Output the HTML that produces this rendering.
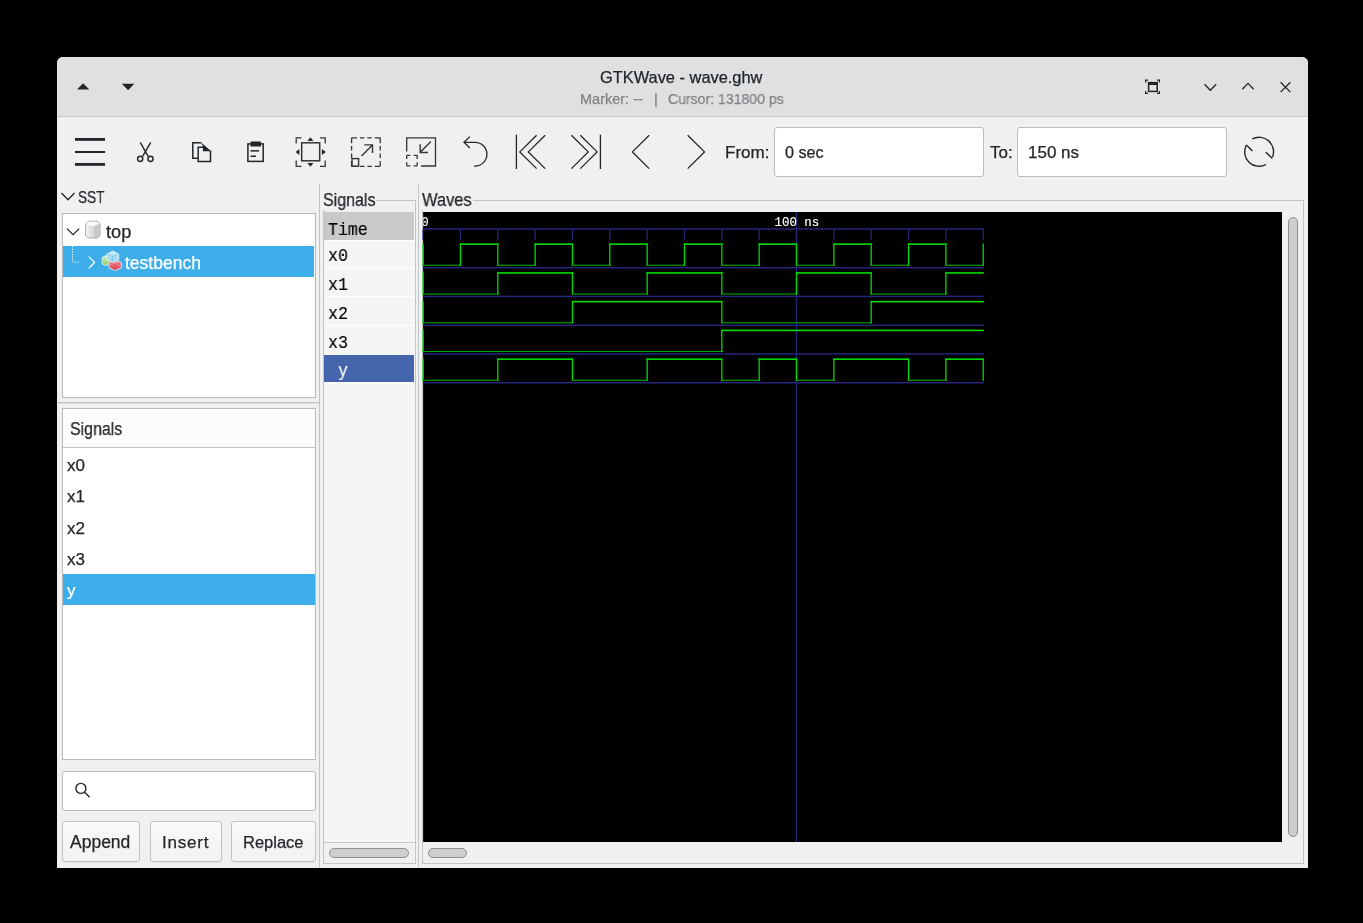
<!DOCTYPE html>
<html><head><meta charset="utf-8">
<style>
*{box-sizing:border-box;margin:0;padding:0}
html,body{width:1363px;height:923px;background:#000;overflow:hidden;font-family:"Liberation Sans",sans-serif;color:#232629}
.a{position:absolute}
.t{position:absolute;white-space:nowrap;line-height:1;will-change:transform;-webkit-text-stroke:0.25px currentColor}
.m{font-family:"Liberation Mono",monospace;-webkit-text-stroke:0.15px currentColor}
.box{position:absolute;background:#fff;border:1px solid #b9babb}
.btn{position:absolute;border:1px solid #c1c2c3;border-radius:3px;background:linear-gradient(#f9f9fa,#f1f2f3);box-shadow:0 1px 0 rgba(0,0,0,0.06)}
.sl{position:absolute;background:#cdcecf;border:1px solid #8e9091;border-radius:6px}
</style></head><body>
<!-- window -->
<div class="a" style="left:57px;top:57px;width:1251px;height:811px;background:#eff0f1;border-radius:6px 6px 0 0;overflow:hidden;">
  <div class="a" style="left:0;top:0;width:1251px;height:60px;background:#dee0e2;border-bottom:1px solid #c5c7c9"></div>
</div>
<!-- title text -->
<div class="t" style="left:600px;top:69px;font-size:16.4px">GTKWave - wave.ghw</div>
<div class="t" style="left:580px;top:92px;font-size:14.5px;color:#808284">Marker: --</div>
<div class="t" style="left:654px;top:92px;font-size:14.5px;color:#808284">|</div>
<div class="t" style="left:668px;top:92px;font-size:14.5px;color:#808284;transform-origin:left;transform:scaleX(0.97)">Cursor: 131800 ps</div>

<!-- toolbar text -->
<div class="t" style="left:725px;top:144px;font-size:17px">From:</div>
<div class="box" style="left:774px;top:127px;width:210px;height:50px;border-radius:3px;border-color:#bcbdbe"></div>
<div class="t" style="left:785px;top:144px;font-size:16.2px">0 sec</div>
<div class="t" style="left:990px;top:144px;font-size:17px">To:</div>
<div class="box" style="left:1017px;top:127px;width:210px;height:50px;border-radius:3px;border-color:#bcbdbe"></div>
<div class="t" style="left:1028px;top:144px;font-size:17px">150 ns</div>

<!-- left pane -->
<div class="t" style="left:78px;top:189px;font-size:17px;transform-origin:left;transform:scaleX(0.8)">SST</div>
<div class="box" style="left:62px;top:213px;width:254px;height:185px"></div>
<div class="a" style="left:63px;top:246px;width:251px;height:31px;background:#3daee9"></div>
<div class="t" style="left:106px;top:223.7px;font-size:17.5px;transform-origin:left;transform:scaleX(1.04)">top</div>
<div class="t" style="left:125px;top:254.5px;font-size:17.5px;color:#fff">testbench</div>
<div class="a" style="left:58px;top:402px;width:261px;height:1px;background:#c2c3c4"></div>
<div class="a" style="left:58px;top:403px;width:261px;height:1px;background:#dcdddf"></div>

<div class="box" style="left:62px;top:408px;width:254px;height:352px"></div>
<div class="a" style="left:63px;top:409px;width:252px;height:39px;background:#fcfcfc;border-bottom:1px solid #c3c4c5"></div>
<div class="t" style="left:70.3px;top:419.5px;font-size:18.1px;transform-origin:left;transform:scaleX(0.88)">Signals</div>
<div class="t" style="left:67px;top:457px;font-size:17px">x0</div>
<div class="t" style="left:67px;top:488px;font-size:17px">x1</div>
<div class="t" style="left:67px;top:520px;font-size:17px">x2</div>
<div class="t" style="left:67px;top:551px;font-size:17px">x3</div>
<div class="a" style="left:63px;top:574px;width:252px;height:31px;background:#3daee9"></div>
<div class="t" style="left:67px;top:581.5px;font-size:17px;color:#fff">y</div>

<div class="box" style="left:62px;top:771px;width:254px;height:40px;border-radius:3px"></div>
<div class="btn" style="left:62px;top:821px;width:78px;height:41px"></div>
<div class="btn" style="left:150px;top:821px;width:72px;height:41px"></div>
<div class="btn" style="left:231px;top:821px;width:85px;height:41px"></div>
<div class="t" style="left:70px;top:834px;font-size:17.5px">Append</div>
<div class="t" style="left:162px;top:834px;font-size:17px;letter-spacing:0.8px">Insert</div>
<div class="t" style="left:243px;top:834px;font-size:16.5px">Replace</div>

<!-- separators -->
<div class="a" style="left:319px;top:184px;width:1px;height:684px;background:#c3c4c5"></div>
<div class="a" style="left:418px;top:184px;width:1px;height:684px;background:#c3c4c5"></div>

<!-- signals frame -->
<div class="a" style="left:323px;top:200px;width:93px;height:664px;border:1px solid #c3c4c5"></div>
<div class="a" style="left:322px;top:190px;width:54px;height:20px;background:#eff0f1"></div>
<div class="t" style="left:323px;top:191px;font-size:18.5px;transform-origin:left;transform:scaleX(0.865)">Signals</div>
<div class="a" style="left:324px;top:212px;width:91px;height:630px;background:#f5f5f5"></div>
<div class="a" style="left:324px;top:842px;width:91px;height:1px;background:#c8c9ca"></div>
<div class="a" style="left:324px;top:212px;width:90px;height:28px;background:#c9c9c9"></div>
<div class="a" style="left:324px;top:240px;width:90px;height:1px;background:#fff"></div>
<div class="a" style="left:324px;top:267px;width:90px;height:1px;background:#fff"></div>
<div class="a" style="left:324px;top:296px;width:90px;height:1px;background:#fff"></div>
<div class="a" style="left:324px;top:325px;width:90px;height:1px;background:#fff"></div>
<div class="a" style="left:324px;top:355px;width:90px;height:27px;background:#4464ac"></div>
<div class="a" style="left:324px;top:382px;width:90px;height:2px;background:#fafafa"></div>
<div class="t m" style="color:#000;left:327.6px;top:221.7px;font-size:18.6px;transform-origin:left;transform:scaleX(0.89)">Time</div>
<div class="t m" style="color:#000;left:327.6px;top:248.0px;font-size:18.6px;transform-origin:left;transform:scaleX(0.89)">x0</div>
<div class="t m" style="color:#000;left:327.6px;top:277.0px;font-size:18.6px;transform-origin:left;transform:scaleX(0.89)">x1</div>
<div class="t m" style="color:#000;left:327.6px;top:306.0px;font-size:18.6px;transform-origin:left;transform:scaleX(0.89)">x2</div>
<div class="t m" style="color:#000;left:327.6px;top:335.0px;font-size:18.6px;transform-origin:left;transform:scaleX(0.89)">x3</div>
<div class="t m" style="left:337.6px;top:363px;font-size:18.6px;color:#fff;transform-origin:left;transform:scaleX(0.89)">y</div>
<div class="sl" style="left:329px;top:848px;width:80px;height:10px"></div>

<!-- waves frame -->
<div class="a" style="left:422px;top:200px;width:882px;height:664px;border:1px solid #c3c4c5"></div>
<div class="a" style="left:421px;top:190px;width:52px;height:20px;background:#eff0f1"></div>
<div class="t" style="left:422px;top:191.5px;font-size:17.9px;transform-origin:left;transform:scaleX(0.92)">Waves</div>
<div class="sl" style="left:1288px;top:217px;width:10px;height:620px"></div>
<div class="sl" style="left:428px;top:848px;width:39px;height:10px"></div>

<svg class="a" style="left:0;top:0;will-change:transform" width="1363" height="923" viewBox="0 0 1363 923">
  <g fill="#232629">
  <!-- title bar left arrows -->
  <path d="M77 89.6 L83.1 83.2 L89.3 89.6 Z"/>
  <path d="M121.8 83.8 L134.4 83.8 L128.1 90.3 Z"/>
  <!-- hamburger -->
  <rect x="75" y="138" width="30" height="2.8"/>
  <rect x="75" y="151" width="30" height="2"/>
  <rect x="75" y="163" width="30" height="2.8"/>
  </g>
  <g fill="none" stroke="#232629" stroke-width="1.4">
  <!-- scissors -->
  <path d="M140.3 142.4 L145.4 151.6 L148.3 156.4 M150.7 142.4 L145.4 151.6 L142.6 156.4"/>
  <circle cx="140.2" cy="158.8" r="2.6" stroke-width="1.5"/>
  <circle cx="150.5" cy="158.8" r="2.6" stroke-width="1.5"/>
  </g>
  <g fill="none" stroke="#232629" stroke-width="1.5">
  <!-- copy -->
  <path d="M197.6 158.3 H192.8 V142.7 H201.2" fill="none" stroke="#232629" stroke-width="1.5"/>
  <path d="M198.2 146.6 V161.4 H210.5 V150.5 M197.5 147.3 H203.5" fill="none" stroke="#232629" stroke-width="1.5"/>
  <path d="M200.6 141.95 L211.2 151.2 L202.9 151.2 L202.9 146 Z" fill="#232629" stroke="none"/>
  </g>
  <!-- paste -->
  <g fill="none" stroke="#232629" stroke-width="1.5">
  <rect x="247.9" y="143.9" width="15.3" height="17.5"/>
  </g>
  <g fill="#232629">
  <rect x="250.5" y="141.5" width="10.4" height="5"/>
  <rect x="250.5" y="150.1" width="8.5" height="1.5"/>
  <rect x="250.5" y="155.5" width="5.5" height="1.5"/>
  </g>
  <!-- zoom fit -->
  <g fill="none" stroke="#333538" stroke-width="1.3">
  <path d="M296.2 143.5 V137.8 H301.5 M320 137.8 H325.2 V143.5 M325.2 160.5 V166.3 H320 M301.5 166.3 H296.2 V160.5"/>
  <rect x="301.7" y="142.8" width="18" height="18" stroke-width="1.5"/>
  </g>
  <g fill="#232629">
  <path d="M307.4 141 L310.4 137.2 L313.4 141 Z"/>
  <path d="M307.4 163 L310.4 166.8 L313.4 163 Z"/>
  <path d="M299.4 149 L295.5 152 L299.4 155 Z"/>
  <path d="M321.9 149 L325.8 152 L321.9 155 Z"/>
  </g>
  <!-- zoom in -->
  <g fill="none" stroke="#333538" stroke-width="1.3">
  <path d="M351.6 137.8 H380.2 M380.2 137.8 V166.3 M380.2 166.3 H351.6 M351.6 166.3 V137.8" stroke-dasharray="5.4 2.9 4.5 2.9 4.5 2.9 5.4 0"/>
  <rect x="352" y="158.6" width="6.6" height="7.6" stroke-width="1.4"/>
  <path d="M361.5 155.9 L372.2 145.2 M364.3 144.9 H372.5 V153.1" stroke-width="1.4"/>
  </g>
  <!-- zoom out -->
  <g fill="none" stroke="#333538" stroke-width="1.3">
  <path d="M406.7 151.5 V137.8 H435.5 V166 H421"/>
  <path d="M406.7 155.3 H417.2 M417.2 155.3 V165.8 M417.2 165.8 H406.7 M406.7 165.8 V155.3" stroke-dasharray="3.6 3.3 3.6 0"/>
  <path d="M430.9 141.6 L420.2 152.3 M420.2 144.3 V152.5 H428.1" stroke-width="1.4"/>
  </g>
  <g fill="none" stroke="#232629" stroke-width="1.3">
  <!-- undo -->
  <path d="M463.8 142.3 H475 A11.9 11.9 0 0 1 475 166.1 H474"/>
  <path d="M469.9 136.6 L464 142.3 L469.9 148"/>
  <!-- first -->
  <path d="M516.4 134.7 V169"/>
  <path d="M536.6 135.2 L519.8 151.9 L536.6 168.6 M545.2 135.2 L528.4 151.9 L545.2 168.6"/>
  <!-- last -->
  <path d="M600.4 134.7 V169"/>
  <path d="M571.4 135.2 L588.2 151.9 L571.4 168.6 M580.3 135.2 L597.1 151.9 L580.3 168.6"/>
  <!-- prev/next -->
  <path d="M649.2 135.2 L632.4 151.9 L649.2 168.6"/>
  <path d="M687.7 135.2 L704.5 151.9 L687.7 168.6"/>
  </g>
  <!-- refresh -->
  <g fill="none" stroke="#232629" stroke-width="1.4">
  <path d="M1246.3 145 A14.5 14.5 0 0 0 1266.1 164.5"/>
  <path d="M1252.3 138.9 A14.5 14.5 0 0 1 1272.6 156.9"/>
  <path d="M1246.4 145 L1252.4 151.1 M1272.4 158.4 L1265.8 152.3"/>
  </g>
  <!-- title bar right icons -->
  <g fill="none" stroke="#232629" stroke-width="1.3">
  <path d="M1204.5 84.2 L1210.3 90.2 L1216.2 84.2"/>
  <path d="M1242.3 89.2 L1248 83.4 L1253.7 89.2"/>
  <path d="M1280.6 82.3 L1290.4 92.1 M1290.4 82.3 L1280.6 92.1"/>
  <rect x="1148.6" y="82.6" width="8.6" height="8.8" stroke-width="1.5"/>
  </g>
  <g fill="#232629">
  <rect x="1148" y="82" width="10" height="3"/>
  <path d="M1145 79.5 h3 v1.2 h-1.8 v1.8 h-1.2z M1160 79.5 h-3 v1.2 h1.8 v1.8 h1.2z M1145 94 h3 v-1.2 h-1.8 v-1.8 h-1.2z M1160 94 h-3 v-1.2 h1.8 v-1.8 h1.2z"/>
  </g>
  <!-- SST chevrons -->
  <g fill="none" stroke="#232629" stroke-width="1.3">
  <path d="M61.5 193 L68 199.8 L74.5 193"/>
  <path d="M67 228.6 L73.1 234.6 L79.2 228.6"/>
  </g>
  <path d="M88.8 256.6 L94.6 262.4 L88.8 268.2" fill="none" stroke="#fff" stroke-width="1.3"/>
  <path d="M72.5 246 V262 H80" fill="none" stroke="#fff" stroke-width="1" stroke-dasharray="1.2 1.4"/>
  <!-- cylinder -->
  <defs>
   <linearGradient id="cyl" x1="0" x2="1" y1="0" y2="0">
    <stop offset="0" stop-color="#f4f4f4"/><stop offset="0.55" stop-color="#d8d8d8"/><stop offset="0.7" stop-color="#c4c4c4"/><stop offset="1" stop-color="#d0d0d0"/>
   </linearGradient>
  </defs>
  <path d="M88.6 221.2 H97 L100 223.6 V235.6 L97 238 H88.6 L85.6 235.6 V223.6 Z" fill="url(#cyl)" stroke="#a9a9a9" stroke-width="1"/>
  <path d="M86.8 224 Q92.8 228 98.8 224 V222.5 Q92.8 220.5 86.8 222.5 Z" fill="#fafafa"/>
  <path d="M86.6 224.5 V235" stroke="#f4f4f4" stroke-width="1"/>
  <!-- testbench cubes -->
  <defs>
   <linearGradient id="cg" x1="0" y1="0" x2="0" y2="1"><stop offset="0" stop-color="#d2f0b8"/><stop offset="1" stop-color="#8cc85c"/></linearGradient>
   <linearGradient id="cr" x1="0" y1="0" x2="0" y2="1"><stop offset="0" stop-color="#f6a0aa"/><stop offset="1" stop-color="#d63c4a"/></linearGradient>
   <linearGradient id="cb" x1="0" y1="0" x2="0" y2="1"><stop offset="0" stop-color="#d4f2fc"/><stop offset="1" stop-color="#86cdec"/></linearGradient>
  </defs>
  <g stroke="#e8f6fc" stroke-width="0.8">
  <path d="M105.6 255.6 L109.1 257.6 V263.7 L105.6 265.7 L102.1 263.7 V257.6 Z" fill="url(#cg)"/>
  <path d="M115.1 259.8 L121.3 262.4 V267.9 L115.1 270.5 L108.9 267.9 V262.4 Z" fill="url(#cr)"/>
  <path d="M112.8 251.1 L118.7 254 V259.7 L112.8 262.6 L106.9 259.7 V254 Z" fill="url(#cb)"/>
  </g>
  <path d="M112.5 255.5 V261.5 M106.9 254 L112.5 256.6 L118.7 254" stroke="#6ab8de" stroke-width="0.6" fill="none"/>
  <path d="M115.1 265 V270 M108.9 262.4 L115.1 265 L121.3 262.4" stroke="#c83040" stroke-width="0.5" fill="none" opacity="0.6"/>
  <!-- search -->
  <g fill="none" stroke="#232629" stroke-width="1.4">
  <circle cx="80.9" cy="788.4" r="5"/>
  <path d="M84.6 792.2 L89.6 797.3"/>
  </g>

  <!-- waves black -->
  <rect x="423" y="212" width="859" height="630" fill="#000"/>
<rect x="423.00" y="228.09" width="560.85" height="1.8" fill="#1f1f68"/>
<rect x="422.45" y="229.50" width="1.3" height="10.30" fill="#25257a"/>
<rect x="459.79" y="229.50" width="1.3" height="10.30" fill="#25257a"/>
<rect x="497.13" y="229.50" width="1.3" height="10.30" fill="#25257a"/>
<rect x="534.47" y="229.50" width="1.3" height="10.30" fill="#25257a"/>
<rect x="571.81" y="229.50" width="1.3" height="10.30" fill="#25257a"/>
<rect x="609.15" y="229.50" width="1.3" height="10.30" fill="#25257a"/>
<rect x="646.49" y="229.50" width="1.3" height="10.30" fill="#25257a"/>
<rect x="683.83" y="229.50" width="1.3" height="10.30" fill="#25257a"/>
<rect x="721.17" y="229.50" width="1.3" height="10.30" fill="#25257a"/>
<rect x="758.51" y="229.50" width="1.3" height="10.30" fill="#25257a"/>
<rect x="795.85" y="229.50" width="1.3" height="10.30" fill="#25257a"/>
<rect x="833.19" y="229.50" width="1.3" height="10.30" fill="#25257a"/>
<rect x="870.53" y="229.50" width="1.3" height="10.30" fill="#25257a"/>
<rect x="907.87" y="229.50" width="1.3" height="10.30" fill="#25257a"/>
<rect x="945.21" y="229.50" width="1.3" height="10.30" fill="#25257a"/>
<rect x="982.55" y="229.50" width="1.3" height="10.30" fill="#25257a"/>
<rect x="423.00" y="266.98" width="560.85" height="1.5" fill="#25257a"/>
<rect x="423.00" y="295.73" width="560.85" height="1.5" fill="#25257a"/>
<rect x="423.00" y="324.48" width="560.85" height="1.5" fill="#25257a"/>
<rect x="423.00" y="353.23" width="560.85" height="1.5" fill="#25257a"/>
<rect x="423.00" y="381.98" width="560.85" height="1.5" fill="#25257a"/>
<rect x="423" y="212" width="1" height="630" fill="#141450"/>
<rect x="795.75" y="212.00" width="1.3" height="630.00" fill="#25257a"/>
<rect x="422.45" y="243.52" width="1.3" height="22.39" fill="#00dc00"/>
<rect x="422.45" y="264.71" width="38.64" height="1.1" fill="#00a800"/>
<rect x="459.79" y="243.52" width="1.3" height="22.39" fill="#00dc00"/>
<rect x="459.79" y="243.37" width="38.64" height="1.6" fill="#00dc00"/>
<rect x="497.13" y="243.52" width="1.3" height="22.39" fill="#00dc00"/>
<rect x="497.13" y="264.71" width="38.64" height="1.1" fill="#00a800"/>
<rect x="534.47" y="243.52" width="1.3" height="22.39" fill="#00dc00"/>
<rect x="534.47" y="243.37" width="38.64" height="1.6" fill="#00dc00"/>
<rect x="571.81" y="243.52" width="1.3" height="22.39" fill="#00dc00"/>
<rect x="571.81" y="264.71" width="38.64" height="1.1" fill="#00a800"/>
<rect x="609.15" y="243.52" width="1.3" height="22.39" fill="#00dc00"/>
<rect x="609.15" y="243.37" width="38.64" height="1.6" fill="#00dc00"/>
<rect x="646.49" y="243.52" width="1.3" height="22.39" fill="#00dc00"/>
<rect x="646.49" y="264.71" width="38.64" height="1.1" fill="#00a800"/>
<rect x="683.83" y="243.52" width="1.3" height="22.39" fill="#00dc00"/>
<rect x="683.83" y="243.37" width="38.64" height="1.6" fill="#00dc00"/>
<rect x="721.17" y="243.52" width="1.3" height="22.39" fill="#00dc00"/>
<rect x="721.17" y="264.71" width="38.64" height="1.1" fill="#00a800"/>
<rect x="758.51" y="243.52" width="1.3" height="22.39" fill="#00dc00"/>
<rect x="758.51" y="243.37" width="38.64" height="1.6" fill="#00dc00"/>
<rect x="795.85" y="243.52" width="1.3" height="22.39" fill="#00dc00"/>
<rect x="795.85" y="264.71" width="38.64" height="1.1" fill="#00a800"/>
<rect x="833.19" y="243.52" width="1.3" height="22.39" fill="#00dc00"/>
<rect x="833.19" y="243.37" width="38.64" height="1.6" fill="#00dc00"/>
<rect x="870.53" y="243.52" width="1.3" height="22.39" fill="#00dc00"/>
<rect x="870.53" y="264.71" width="38.64" height="1.1" fill="#00a800"/>
<rect x="907.87" y="243.52" width="1.3" height="22.39" fill="#00dc00"/>
<rect x="907.87" y="243.37" width="38.64" height="1.6" fill="#00dc00"/>
<rect x="945.21" y="243.52" width="1.3" height="22.39" fill="#00dc00"/>
<rect x="945.21" y="264.71" width="38.64" height="1.1" fill="#00a800"/>
<rect x="982.55" y="243.52" width="1.3" height="22.39" fill="#00dc00"/>
<rect x="422.45" y="272.27" width="1.3" height="22.39" fill="#00dc00"/>
<rect x="422.45" y="293.46" width="75.98" height="1.1" fill="#00a800"/>
<rect x="497.13" y="272.27" width="1.3" height="22.39" fill="#00dc00"/>
<rect x="497.13" y="272.12" width="75.98" height="1.6" fill="#00dc00"/>
<rect x="571.81" y="272.27" width="1.3" height="22.39" fill="#00dc00"/>
<rect x="571.81" y="293.46" width="75.98" height="1.1" fill="#00a800"/>
<rect x="646.49" y="272.27" width="1.3" height="22.39" fill="#00dc00"/>
<rect x="646.49" y="272.12" width="75.98" height="1.6" fill="#00dc00"/>
<rect x="721.17" y="272.27" width="1.3" height="22.39" fill="#00dc00"/>
<rect x="721.17" y="293.46" width="75.98" height="1.1" fill="#00a800"/>
<rect x="795.85" y="272.27" width="1.3" height="22.39" fill="#00dc00"/>
<rect x="795.85" y="272.12" width="75.98" height="1.6" fill="#00dc00"/>
<rect x="870.53" y="272.27" width="1.3" height="22.39" fill="#00dc00"/>
<rect x="870.53" y="293.46" width="75.98" height="1.1" fill="#00a800"/>
<rect x="945.21" y="272.27" width="1.3" height="22.39" fill="#00dc00"/>
<rect x="945.21" y="272.12" width="38.64" height="1.6" fill="#00dc00"/>
<rect x="422.45" y="301.02" width="1.3" height="22.39" fill="#00dc00"/>
<rect x="422.45" y="322.21" width="150.66" height="1.1" fill="#00a800"/>
<rect x="571.81" y="301.02" width="1.3" height="22.39" fill="#00dc00"/>
<rect x="571.81" y="300.87" width="150.66" height="1.6" fill="#00dc00"/>
<rect x="721.17" y="301.02" width="1.3" height="22.39" fill="#00dc00"/>
<rect x="721.17" y="322.21" width="150.66" height="1.1" fill="#00a800"/>
<rect x="870.53" y="301.02" width="1.3" height="22.39" fill="#00dc00"/>
<rect x="870.53" y="300.87" width="113.32" height="1.6" fill="#00dc00"/>
<rect x="422.45" y="329.77" width="1.3" height="22.39" fill="#00dc00"/>
<rect x="422.45" y="350.96" width="300.02" height="1.1" fill="#00a800"/>
<rect x="721.17" y="329.77" width="1.3" height="22.39" fill="#00dc00"/>
<rect x="721.17" y="329.62" width="262.68" height="1.6" fill="#00dc00"/>
<rect x="422.45" y="358.52" width="1.3" height="22.39" fill="#00dc00"/>
<rect x="422.45" y="379.71" width="75.98" height="1.1" fill="#00a800"/>
<rect x="497.13" y="358.52" width="1.3" height="22.39" fill="#00dc00"/>
<rect x="497.13" y="358.37" width="75.98" height="1.6" fill="#00dc00"/>
<rect x="571.81" y="358.52" width="1.3" height="22.39" fill="#00dc00"/>
<rect x="571.81" y="379.71" width="75.98" height="1.1" fill="#00a800"/>
<rect x="646.49" y="358.52" width="1.3" height="22.39" fill="#00dc00"/>
<rect x="646.49" y="358.37" width="75.98" height="1.6" fill="#00dc00"/>
<rect x="721.17" y="358.52" width="1.3" height="22.39" fill="#00dc00"/>
<rect x="721.17" y="379.71" width="38.64" height="1.1" fill="#00a800"/>
<rect x="758.51" y="358.52" width="1.3" height="22.39" fill="#00dc00"/>
<rect x="758.51" y="358.37" width="38.64" height="1.6" fill="#00dc00"/>
<rect x="795.85" y="358.52" width="1.3" height="22.39" fill="#00dc00"/>
<rect x="795.85" y="379.71" width="38.64" height="1.1" fill="#00a800"/>
<rect x="833.19" y="358.52" width="1.3" height="22.39" fill="#00dc00"/>
<rect x="833.19" y="358.37" width="75.98" height="1.6" fill="#00dc00"/>
<rect x="907.87" y="358.52" width="1.3" height="22.39" fill="#00dc00"/>
<rect x="907.87" y="379.71" width="38.64" height="1.1" fill="#00a800"/>
<rect x="945.21" y="358.52" width="1.3" height="22.39" fill="#00dc00"/>
<rect x="945.21" y="358.37" width="38.64" height="1.6" fill="#00dc00"/>
<rect x="982.55" y="358.52" width="1.3" height="22.39" fill="#00dc00"/>
  <defs><clipPath id="wclip"><rect x="423" y="212" width="859" height="630"/></clipPath></defs>
  <g clip-path="url(#wclip)" font-family="Liberation Mono" fill="#fff" stroke="#fff" stroke-width="0.15">
  <text transform="translate(421.2,225.8) scale(0.94,1)" font-size="13.2">0</text>
  <text transform="translate(774.6,225.8) scale(0.94,1)" font-size="13.2">100 ns</text>
  </g>
</svg>
</body></html>
